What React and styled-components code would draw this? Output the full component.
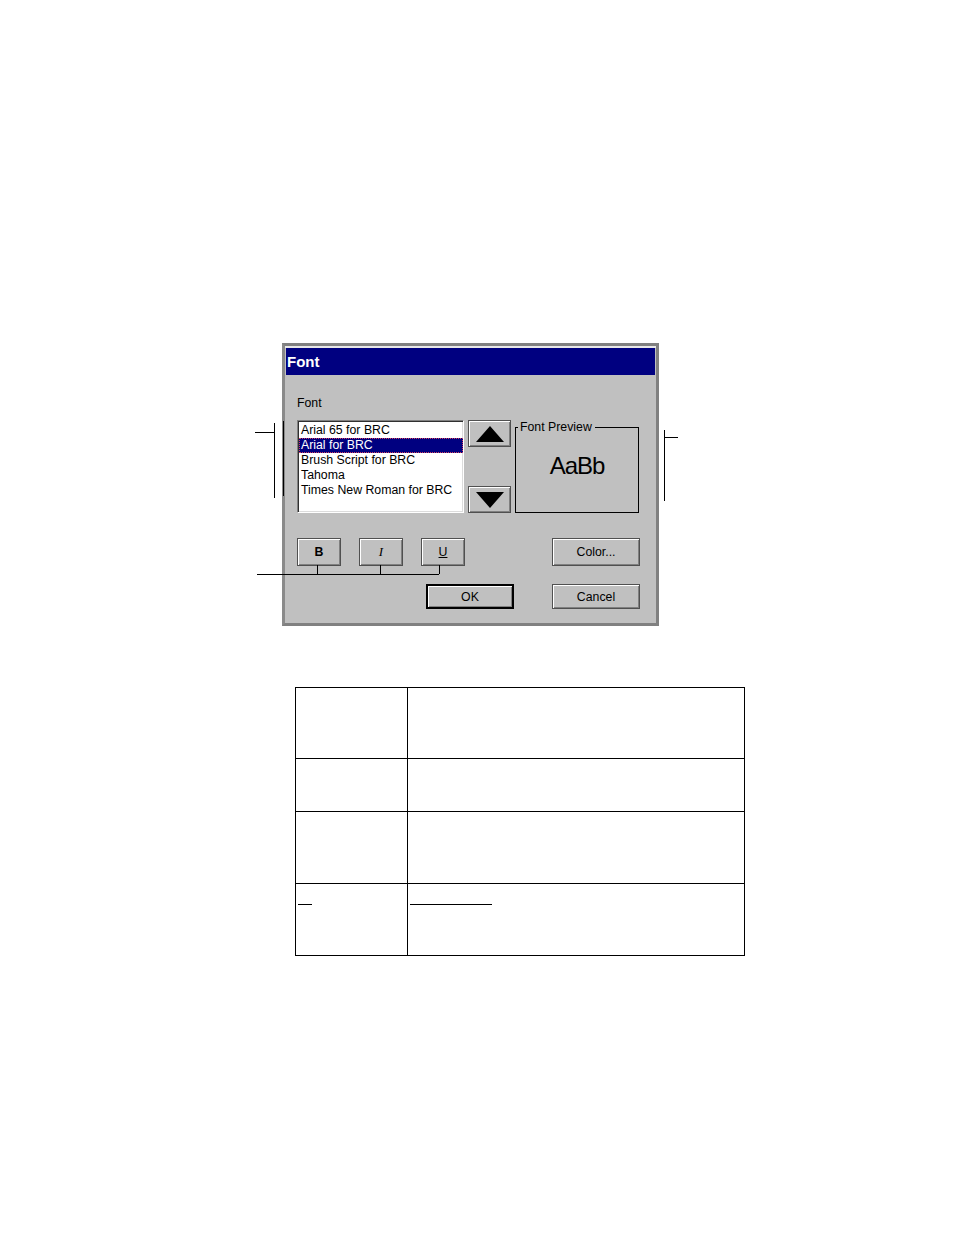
import React from "react";
import styled, { createGlobalStyle } from "styled-components";

const GlobalStyle = createGlobalStyle`
  html, body {
    margin: 0;
    padding: 0;
    background: #fff;
  }
  body {
    font-family: "Liberation Sans", Arial, sans-serif;
  }
`;

const Page = styled.div`
  width: 954px;
  min-height: 1235px;
  padding-top: 343px;
  box-sizing: border-box;
`;

const Figure = styled.div`
  position: relative;
  margin-left: 282px;
  width: 377px;
`;

const Dialog = styled.div`
  width: 377px;
  height: 283px;
  box-sizing: border-box;
  border: 3px solid #808080;
  border-left-color: #8a8a8a;
  background: #c0c0c0;
  padding: 2px 1px 0;
  box-shadow: inset 0 2px 0 #e8e8e8;
  display: flex;
  flex-direction: column;
  font-size: 12.3px;
  color: #000;
`;

const TitleBar = styled.div`
  height: 27px;
  background: #000080;
  color: #fff;
  font-weight: bold;
  font-size: 15px;
  line-height: 27px;
  padding-left: 1px;
`;

const Body = styled.div`
  flex: 1;
  padding: 21px 14px 0 11px;
  display: flex;
  flex-direction: column;
`;

const Label = styled.div`
  line-height: 15px;
  height: 15px;
`;

const TopRow = styled.div`
  margin-top: 9px;
  height: 93px;
  display: flex;
  gap: 4px;
`;

const ListBox = styled.div`
  flex-shrink: 0;
  width: 167px;
  height: 93px;
  box-sizing: border-box;
  background: #fff;
  border-top: 1px solid #808080;
  border-left: 1px solid #808080;
  border-right: 1px solid #fff;
  border-bottom: 1px solid #fff;
  box-shadow: inset 1px 1px 0 #303030, inset -1px -1px 0 #dcdcdc;
  padding: 2px 0 0 1px;
`;

const ListItem = styled.div`
  height: 15px;
  line-height: 15px;
  padding-left: 2px;
  white-space: nowrap;
  overflow: hidden;
  box-sizing: border-box;
  background: ${(p) => (p.$selected ? "#000080" : "transparent")};
  color: ${(p) => (p.$selected ? "#fff" : "#000")};
  outline: ${(p) => (p.$selected ? "1px dotted #d04060" : "none")};
  outline-offset: -1px;
`;

const ArrowColumn = styled.div`
  flex-shrink: 0;
  display: flex;
  flex-direction: column;
  justify-content: space-between;
`;

const RaisedButton = styled.div`
  flex-shrink: 0;
  box-sizing: border-box;
  width: ${(p) => p.$w}px;
  height: ${(p) => p.$h}px;
  background: #c0c0c0;
  border: 1px solid #505050;
  box-shadow: inset 1px 1px 0 #fff, inset -1px -1px 0 #808080;
  display: flex;
  align-items: center;
  justify-content: center;
  font-size: 12.3px;
  ${(p) =>
    p.$default &&
    `
    border: 2px solid #000;
    box-shadow: inset 1px 1px 0 #fff, inset -1px -1px 0 #808080;
  `}
`;

const Preview = styled.fieldset`
  flex-shrink: 0;
  margin: 0;
  padding: 0;
  width: 124px;
  height: 93px;
  box-sizing: border-box;
  border: 1px solid #000;
  display: flex;
  justify-content: center;
  min-width: 0;
`;

const PreviewLegend = styled.legend`
  margin-left: 2px;
  padding: 0 3px 0 2px;
  line-height: 15px;
  font-size: 12.3px;
`;

const Sample = styled.div`
  font-size: 24px;
  margin-top: 17px;
  letter-spacing: -1px;
`;

const StyleRow = styled.div`
  margin-top: 25px;
  margin-right: 1px;
  display: flex;
  gap: 18px;
`;

const ButtonRow = styled.div`
  margin-top: 18px;
  margin-right: 1px;
  display: flex;
  justify-content: flex-end;
  gap: 38px;
`;

const Spacer = styled.div`
  flex: 1;
`;

const ItalicGlyph = styled.span`
  font-family: "Liberation Serif", serif;
  font-style: italic;
  font-size: 13px;
`;

const UnderGlyph = styled.span`
  text-decoration: underline;
`;

const Line = styled.div`
  position: absolute;
  background: #000;
  left: ${(p) => p.$x}px;
  top: ${(p) => p.$y}px;
  width: ${(p) => p.$w || 1}px;
  height: ${(p) => p.$h || 1}px;
`;

const Triangle = ({ down }) => (
  <svg width="30" height="18" viewBox="0 0 30 18">
    <polygon points={down ? "1,1 29,1 15,17" : "15,1 29,17 1,17"} fill="#000" />
  </svg>
);

const Table = styled.table`
  margin: 61px 0 0 295px;
  border-collapse: collapse;
  table-layout: fixed;
`;

const Cell = styled.td`
  border: 1.3px solid #000;
  height: ${(p) => p.$h}px;
  width: ${(p) => p.$w}px;
  padding: 0;
  vertical-align: top;
  box-sizing: border-box;
`;

const Blank = styled.div`
  margin: 20px 0 0 ${(p) => p.$left}px;
  width: ${(p) => p.$w}px;
  border-bottom: 1px solid #000;
`;

const fonts = [
  "Arial 65 for BRC",
  "Arial for BRC",
  "Brush Script for BRC",
  "Tahoma",
  "Times New Roman for BRC",
];

const rows = [71, 53, 72, 72];

export default function App() {
  return (
    <Page>
      <GlobalStyle />
      <Figure>
        <Dialog>
          <TitleBar>Font</TitleBar>
          <Body>
            <Label>Font</Label>
            <TopRow>
              <ListBox>
                {fonts.map((f, i) => (
                  <ListItem key={f} $selected={i === 1}>
                    {f}
                  </ListItem>
                ))}
              </ListBox>
              <ArrowColumn>
                <RaisedButton $w={43} $h={27}>
                  <Triangle />
                </RaisedButton>
                <RaisedButton $w={43} $h={27}>
                  <Triangle down />
                </RaisedButton>
              </ArrowColumn>
              <Preview>
                <PreviewLegend>Font Preview</PreviewLegend>
                <Sample>AaBb</Sample>
              </Preview>
            </TopRow>
            <StyleRow>
              <RaisedButton $w={44} $h={28}>
                <b>B</b>
              </RaisedButton>
              <RaisedButton $w={44} $h={28}>
                <ItalicGlyph>I</ItalicGlyph>
              </RaisedButton>
              <RaisedButton $w={44} $h={28}>
                <UnderGlyph>U</UnderGlyph>
              </RaisedButton>
              <Spacer />
              <RaisedButton $w={88} $h={28}>
                Color...
              </RaisedButton>
            </StyleRow>
            <ButtonRow>
              <RaisedButton $w={88} $h={25} $default>
                OK
              </RaisedButton>
              <RaisedButton $w={88} $h={25}>
                Cancel
              </RaisedButton>
            </ButtonRow>
          </Body>
        </Dialog>

        <Line $x={-8} $y={80} $h={75} />
        <Line $x={-27} $y={89} $w={20} />
        <Line $x={1} $y={78} $h={75} />
        <Line $x={382} $y={87} $h={71} />
        <Line $x={382} $y={94} $w={14} />
        <Line $x={-25} $y={231} $w={182} />
        <Line $x={35} $y={222} $h={9} />
        <Line $x={98} $y={222} $h={9} />
        <Line $x={157} $y={222} $h={9} />
      </Figure>

      <Table>
        <tbody>
          {rows.map((h, i) => (
            <tr key={i}>
              <Cell $h={h} $w={112}>
                {i === 3 && <Blank $left={2} $w={14} />}
              </Cell>
              <Cell $h={h} $w={337}>
                {i === 3 && <Blank $left={2} $w={82} />}
              </Cell>
            </tr>
          ))}
        </tbody>
      </Table>
    </Page>
  );
}
